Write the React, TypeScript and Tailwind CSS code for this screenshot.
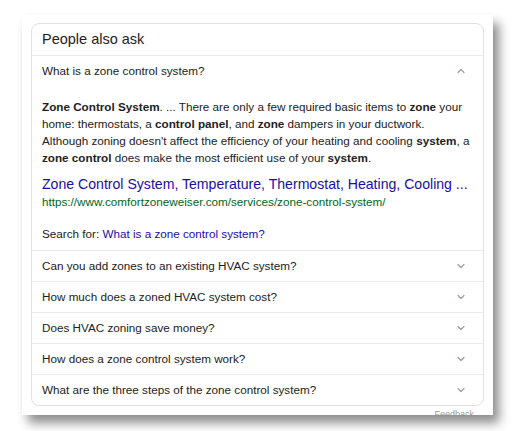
import { ChevronDown, ChevronUp } from "lucide-react";

const questions = [
  "Can you add zones to an existing HVAC system?",
  "How much does a zoned HVAC system cost?",
  "Does HVAC zoning save money?",
  "How does a zone control system work?",
  "What are the three steps of the zone control system?",
];

export default function App() {
  return (
    <div
      className="h-[431px] w-[512px] overflow-hidden bg-white pl-[22px] pt-[15px]"
      style={{ fontFamily: '"Liberation Sans", Arial, sans-serif' }}
    >
      <div className="h-[400px] w-[471px] overflow-hidden bg-white px-[9px] pt-[8px] shadow-[6px_8px_10px_rgba(0,0,0,0.45)]">
        <div className="rounded-lg border border-[#dfe1e5] bg-white">
          <div className="flex h-[32px] items-center border-b border-[#ebebeb] px-[10px] text-[14.5px] text-[#222]">
            People also ask
          </div>

          <div className="flex h-[30px] items-center justify-between px-[10px] text-[11.7px] text-[#222]">
            <span>What is a zone control system?</span>
            <ChevronUp className="mr-[6px] h-[12px] w-[12px] text-[#9aa0a6]" strokeWidth={2.5} />
          </div>

          <div className="px-[10px] pb-[8px] pt-[12px] text-[11.7px] leading-[17px] text-[#222]">
            <p>
              <b>Zone Control System</b>. ... There are only a few required basic items to <b>zone</b> your
              home: thermostats, a <b>control panel</b>, and <b>zone</b> dampers in your ductwork.
              Although zoning doesn't affect the efficiency of your heating and cooling <b>system</b>, a{" "}
              <b>zone control</b> does make the most efficient use of your <b>system</b>.
            </p>
            <div className="mt-[8px] whitespace-nowrap text-[14.1px] leading-[20px] text-[#1a0dab]">
              Zone Control System, Temperature, Thermostat, Heating, Cooling ...
            </div>
            <div className="text-[11.7px] leading-[16px] text-[#006621]">
              https://www.comfortzoneweiser.com/services/zone-control-system/
            </div>
            <div className="mt-[16px] text-[11.7px] leading-[16px] text-[#222]">
              Search for: <span className="text-[#1a0dab]">What is a zone control system?</span>
            </div>
          </div>

          {questions.map((q) => (
            <div
              key={q}
              className="flex h-[31px] items-center justify-between border-t border-[#ebebeb] px-[10px] text-[11.7px] text-[#222]"
            >
              <span>{q}</span>
              <ChevronDown className="mr-[6px] h-[12px] w-[12px] text-[#9aa0a6]" strokeWidth={2.5} />
            </div>
          ))}
        </div>
        <div className="mt-[3px] pr-[10px] text-right text-[9px] leading-[10px] text-[#999]">Feedback</div>
      </div>
    </div>
  );
}
